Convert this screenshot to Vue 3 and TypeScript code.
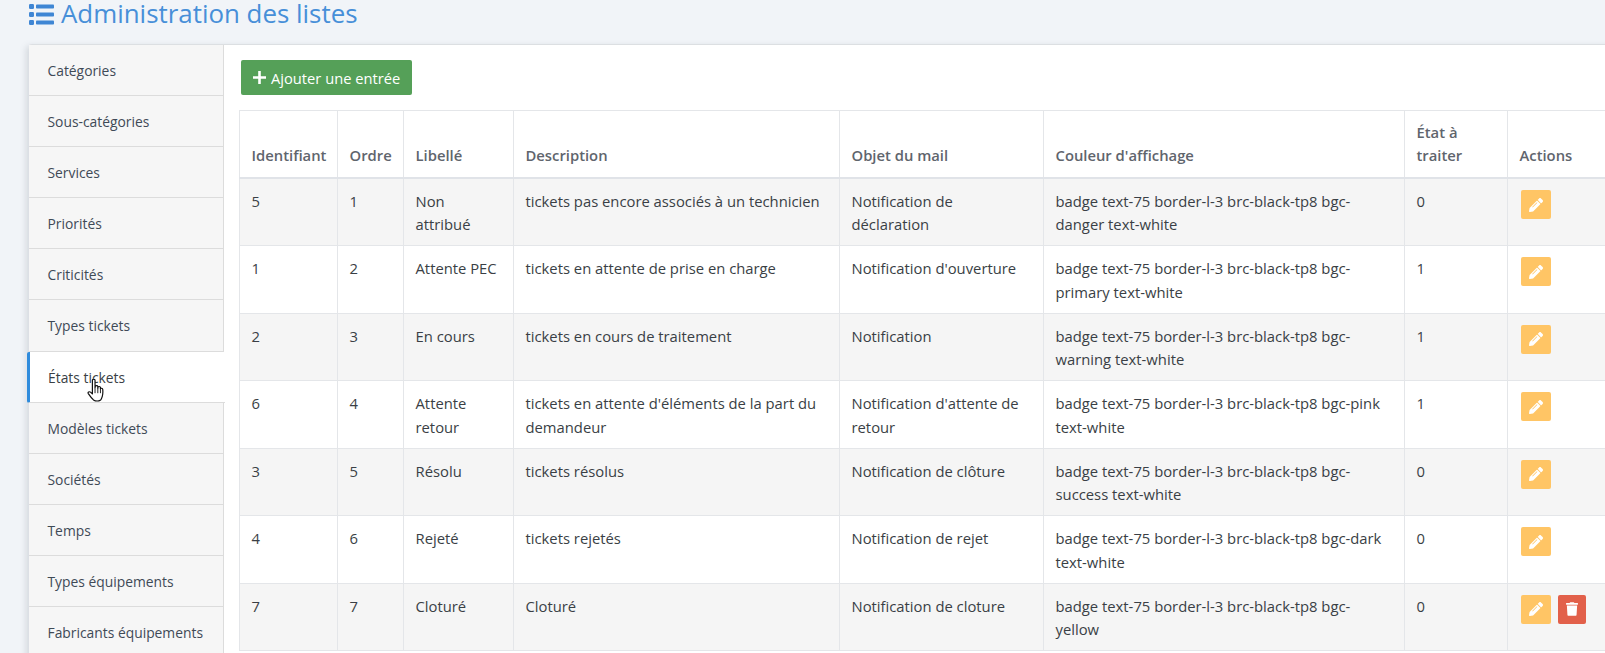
<script setup lang="ts">
interface Row { id: number; order: number; label: string; desc: string; mail: string; color: string; todo: number; del?: boolean }
const tabs: string[] = ['Catégories','Sous-catégories','Services','Priorités','Criticités','Types tickets','États tickets','Modèles tickets','Sociétés','Temps','Types équipements','Fabricants équipements']
const heads: string[] = ['Identifiant','Ordre','Libellé','Description','Objet du mail',"Couleur d'affichage",'État à traiter','Actions']
const prefix = 'badge text-75 border-l-3 brc-black-tp8 '
const rows: Row[] = [
  { id: 5, order: 1, label: 'Non attribué', desc: 'tickets pas encore associés à un technicien', mail: 'Notification de déclaration', color: prefix + 'bgc-danger text-white', todo: 0 },
  { id: 1, order: 2, label: 'Attente PEC', desc: 'tickets en attente de prise en charge', mail: "Notification d'ouverture", color: prefix + 'bgc-primary text-white', todo: 1 },
  { id: 2, order: 3, label: 'En cours', desc: 'tickets en cours de traitement', mail: 'Notification', color: prefix + 'bgc-warning text-white', todo: 1 },
  { id: 6, order: 4, label: 'Attente retour', desc: "tickets en attente d'éléments de la part du demandeur", mail: "Notification d'attente de retour", color: prefix + 'bgc-pink text-white', todo: 1 },
  { id: 3, order: 5, label: 'Résolu', desc: 'tickets résolus', mail: 'Notification de clôture', color: prefix + 'bgc-success text-white', todo: 0 },
  { id: 4, order: 6, label: 'Rejeté', desc: 'tickets rejetés', mail: 'Notification de rejet', color: prefix + 'bgc-dark text-white', todo: 0 },
  { id: 7, order: 7, label: 'Cloturé', desc: 'Cloturé', mail: 'Notification de cloture', color: prefix + 'bgc-yellow', todo: 0, del: true },
]
const colWidths: number[] = [98, 66, 110, 326, 204, 361, 103, 140]
</script>

<template>
  <div class="page">
    <h1 class="title">
      <svg class="title-icon" viewBox="0 0 25 21" width="25" height="21" aria-hidden="true">
        <rect x="0" y="0" width="5" height="5" rx="1.2" />
        <rect x="0" y="8" width="5" height="5" rx="1.2" />
        <rect x="0" y="16" width="5" height="5" rx="1.2" />
        <rect x="7" y="0.5" width="18" height="4" rx="0.8" />
        <rect x="7" y="8.5" width="18" height="4" rx="0.8" />
        <rect x="7" y="16.5" width="18" height="4" rx="0.8" />
      </svg>
      <span class="title-text">Administration des listes</span>
    </h1>
    <div class="card">
      <ul class="tabs">
        <li v-for="t in tabs" :key="t" class="tab" :class="{ active: t === 'États tickets' }">{{ t }}</li>
      </ul>
      <div class="content">
        <button class="add" type="button">
          <svg viewBox="0 0 12 12" width="13" height="13" aria-hidden="true"><path d="M4.800 0h2.400v4.800H12v2.400H7.200V12H4.800V7.200H0V4.800h4.800z" /></svg>
          <span>Ajouter une entrée</span>
        </button>
        <table class="grid">
          <colgroup>
            <col v-for="(w, i) in colWidths" :key="i" :style="{ width: w + 'px' }" />
          </colgroup>
          <thead>
            <tr><th v-for="h in heads" :key="h">{{ h }}</th></tr>
          </thead>
          <tbody>
            <tr v-for="r in rows" :key="r.id">
              <td>{{ r.id }}</td>
              <td>{{ r.order }}</td>
              <td>{{ r.label }}</td>
              <td>{{ r.desc }}</td>
              <td>{{ r.mail }}</td>
              <td>{{ r.color }}</td>
              <td>{{ r.todo }}</td>
              <td class="actions">
                <span class="act edit">
                  <svg viewBox="0 0 512 512" width="14" height="14" aria-hidden="true"><path d="M497.9 142.1l-46.1 46.1c-4.7 4.7-12.3 4.7-17 0l-111-111c-4.7-4.7-4.7-12.3 0-17l46.1-46.1c18.7-18.7 49.1-18.7 67.9 0l60.1 60.1c18.8 18.7 18.8 49.1 0 67.9zM284.2 99.8L21.6 362.4.4 483.9c-2.9 16.4 11.4 30.6 27.8 27.8l121.5-21.3 262.6-262.6c4.7-4.7 4.7-12.3 0-17l-111-111c-4.8-4.7-12.4-4.7-17.1 0zM124.1 339.9c-5.5-5.5-5.5-14.3 0-19.8l154-154c5.5-5.5 14.3-5.5 19.8 0s5.5 14.3 0 19.8l-154 154c-5.5 5.5-14.3 5.5-19.8 0z" /></svg>
                </span>
                <span v-if="r.del" class="act del">
                  <svg viewBox="0 0 448 512" width="12" height="14" aria-hidden="true"><path d="M432 32H312l-9.4-18.7A24 24 0 0 0 281.1 0H166.8a23.72 23.72 0 0 0-21.4 13.3L136 32H16A16 16 0 0 0 0 48v32a16 16 0 0 0 16 16h416a16 16 0 0 0 16-16V48a16 16 0 0 0-16-16zM53.2 467a48 48 0 0 0 47.9 45h245.8a48 48 0 0 0 47.9-45L416 128H32z" /></svg>
                </span>
              </td>
            </tr>
          </tbody>
        </table>
      </div>
    </div>
    <svg class="cursor" viewBox="1 1 15 22" width="18" height="24" preserveAspectRatio="none" aria-hidden="true">
      <path d="M5.500 2.200c0-1.200 2.200-1.200 2.200 0v7l.2-1.400c.2-1 2-1 2.100.1v1.600l.2-1c.2-1 1.900-.9 2 .2v1.300c.3-.9 1.800-.7 1.900.4.2 2 .1 4.500-.3 6.300-.4 1.700-.9 2.800-1.400 3.500-1.800 1.200-4.200 1.200-6 0-1.300-1.400-2.700-3.200-4.300-5.800-.7-1.200.8-2.300 1.800-1.300l1.600 1.600z" fill="#fff" stroke="#111" stroke-width="1" stroke-linejoin="round" />
      <path d="M7.700 9.500v4.500M10 9.500v4.500M12.200 10v4" stroke="#111" stroke-width=".8" fill="none" />
    </svg>
  </div>
</template>

<style>
html, body { margin: 0; overflow: hidden; background: #f1f4f8; }
</style>

<style scoped>
.page {
  position: relative;
  width: 1605px;
  height: 653px;
  overflow: hidden;
  font-family: "Open Sans", sans-serif;
  font-size: 14px;
  color: #3a3f45;
  background: #f1f4f8;
  box-sizing: border-box;
  padding-left: 29px;
}
.title {
  display: flex;
  align-items: center;
  gap: 7px;
  margin: 0;
  height: 44px;
  padding-bottom: 16px;
  box-sizing: border-box;
  font-weight: 400;
  font-size: 25.900px;
  line-height: 28px;
  color: #478fd8;
}
.title-text { margin-bottom: 2px; }
.title-icon { fill: #3f86d4; flex: none; }
.card {
  display: flex;
  width: 1640px;
  background: #fff;
  border: 1px solid #dcdfe2;
  border-left: none;
  border-radius: 3px 0 0 0;
  box-shadow: -3px 2px 6px rgba(90, 100, 110, 0.18);
  box-sizing: border-box;
  height: 640px;
}
.tabs {
  list-style: none;
  margin: 0;
  padding: 0;
  width: 194px;
  flex: none;
  background: #f6f6f6;
  border-right: 1px solid #dcdcdc;
}
.tab {
  height: 51.100px;
  box-sizing: border-box;
  padding: 0 18.500px;
  line-height: 51px;
  font-size: 13.850px;
  white-space: nowrap;
  border-bottom: 1px solid #dcdcdc;
  color: #3f4a56;
}
.tab.active {
  position: relative;
  background: #fff;
  color: #3a3f45;
  margin-right: -2px;
  margin-left: -2px;
  border-left: 3px solid #2f8bdc;
  border-radius: 2px 0 0 2px;
  padding-left: 18px;
}
.content {
  flex: 1;
  padding: 15px;
  min-width: 0;
}
.add {
  display: flex;
  align-items: center;
  gap: 5px;
  margin: 0 0 15px 2px;
  width: 171px;
  height: 35px;
  padding: 0 10px 0 12px;
  border: none;
  border-radius: 2px;
  background: #55a058;
  color: #fff;
  font-family: inherit;
  font-size: 14.700px;
  white-space: nowrap;
  box-sizing: border-box;
}
.add svg { fill: #fff; flex: none; }
.grid {
  border-collapse: collapse;
  table-layout: fixed;
  width: 1408px;
  font-size: 14.800px;
  line-height: 23.300px;
}
.grid th, .grid td {
  border: 1px solid #e4e6e9;
  padding: 11px 11px 8.860px 11.500px;
  text-align: left;
}
.grid th {
  vertical-align: bottom;
  font-weight: 600;
  line-height: 22.500px;
  padding-top: 10px;
  padding-bottom: 11px;
  color: #5f656d;
  border-bottom: 2px solid #e0e3e8;
}
.grid td { vertical-align: top; color: #3a3f45; }
.grid td.actions { padding-left: 12.500px; white-space: nowrap; }
.grid tbody tr:nth-child(odd) { background: #f5f5f5; }
.act {
  display: inline-flex;
  align-items: center;
  justify-content: center;
  height: 29px;
  border-radius: 2px;
  vertical-align: top;
}
.act svg { fill: #fff; }
.edit { width: 30px; background: #ffc565; }
.del { width: 28px; background: #e2604a; margin-left: 7px; }
.cursor { position: absolute; left: 87px; top: 379px; }
</style>
